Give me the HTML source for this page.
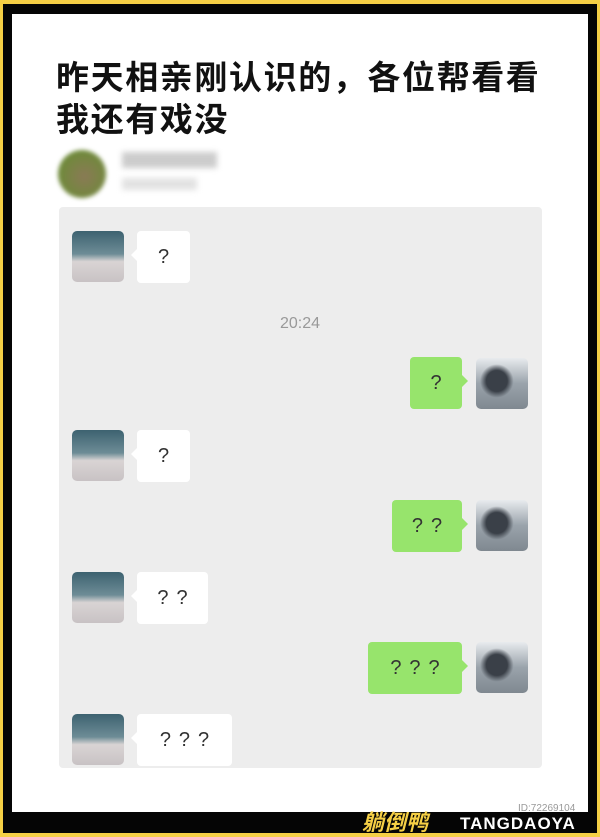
<!DOCTYPE html>
<html><head><meta charset="utf-8"><style>
*{margin:0;padding:0;box-sizing:border-box}
html,body{width:600px;height:837px}
body{background:#f5cf45;position:relative;overflow:hidden;font-family:"Liberation Sans","Noto Sans CJK SC",sans-serif}
.blk{position:absolute;left:3px;top:4px;width:594px;height:829px;background:#050505}
.wh{position:absolute;left:12px;top:14px;width:576px;height:798px;background:#fff}
.t{position:absolute;left:56px;font-size:33px;font-weight:bold;color:#111;line-height:40px;letter-spacing:1.6px;white-space:nowrap}
.chat{position:absolute;left:59px;top:207px;width:483px;height:561px;background:#ededed;border-radius:4px}
.av{position:absolute;width:52px;height:51px;border-radius:5px}
.la{left:72px;background:linear-gradient(180deg,#3d6270 0%,#6d8c96 45%,#d9d4d4 60%,#c8c2c4 100%)}
.ra{left:476px;background:radial-gradient(circle at 40% 45%,#3a4048 0 25%,transparent 40%),linear-gradient(180deg,#e8ebee 0%,#9aa3ab 50%,#7f8890 100%)}
.b{position:absolute;height:52px;border-radius:4px;font-size:20px;color:#333;display:flex;align-items:center;justify-content:center;letter-spacing:8px;padding-left:8px}
.lb{left:137px;background:#fff}
.rb{background:#97e46c}
.lb:before{content:"";position:absolute;left:-6px;top:18px;border:6px solid transparent;border-left:0;border-right-color:#fff}
.rb:after{content:"";position:absolute;right:-6px;top:18px;border:6px solid transparent;border-right:0;border-left-color:#97e46c}
</style></head><body>
<div class="blk"></div><div class="wh"></div>
<div class="t" style="top:58px">昨天相亲刚认识的，各位帮看看</div>
<div class="t" style="top:100px">我还有戏没</div>
<div style="position:absolute;left:58px;top:150px;width:48px;height:48px;border-radius:50%;background:radial-gradient(circle at 55% 55%,#8a7a55,#6e8a3a 70%,#b9d89a);filter:blur(2px)"></div>
<div style="position:absolute;left:122px;top:152px;width:95px;height:16px;background:#ccc;filter:blur(3px)"></div>
<div style="position:absolute;left:122px;top:178px;width:75px;height:12px;background:#e2e2e2;filter:blur(3px)"></div>
<div class="chat"></div>
<div class="av la" style="top:231px"></div><div class="b lb" style="top:231px;width:53px">?</div>
<div style="position:absolute;left:0;width:600px;top:315px;text-align:center;font-size:16px;color:#999">20:24</div>
<div class="av ra" style="top:358px"></div><div class="b rb" style="top:357px;left:410px;width:52px">?</div>
<div class="av la" style="top:430px"></div><div class="b lb" style="top:430px;width:53px">?</div>
<div class="av ra" style="top:500px"></div><div class="b rb" style="top:500px;left:392px;width:70px">??</div>
<div class="av la" style="top:572px"></div><div class="b lb" style="top:572px;width:71px">??</div>
<div class="av ra" style="top:642px"></div><div class="b rb" style="top:642px;left:368px;width:94px">???</div>
<div class="av la" style="top:714px"></div><div class="b lb" style="top:714px;width:95px">???</div>
<div style="position:absolute;left:362px;top:812px;font-size:22px;line-height:22px;font-weight:bold;font-style:italic;color:#f5cf45">躺倒鸭</div>
<div style="position:absolute;left:460px;top:814px;font-size:17px;line-height:19px;font-weight:bold;color:#fff;letter-spacing:1px">TANGDAOYA</div>
<div style="position:absolute;left:518px;top:803px;font-size:10px;color:#999">ID:72269104</div>
</body></html>
